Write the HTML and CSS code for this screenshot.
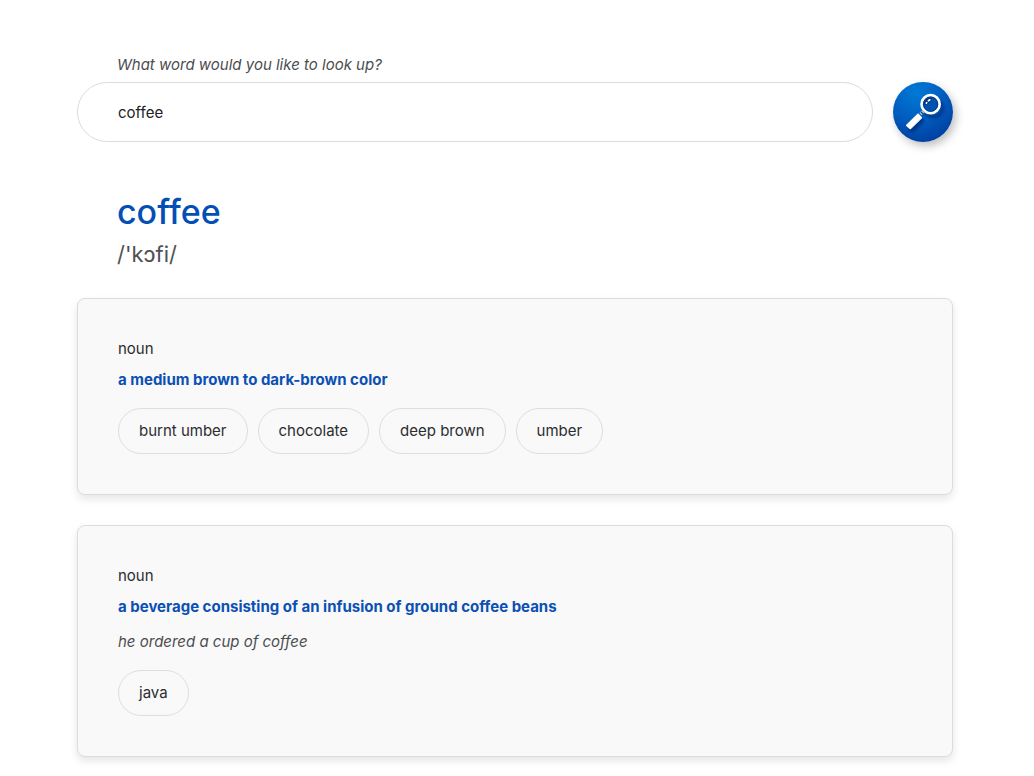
FILE: index.html
```html
<!DOCTYPE html>
<html lang="en">
<head>
<meta charset="utf-8">
<meta name="viewport" content="width=device-width, initial-scale=1">
<title>Dictionary</title>
<link rel="stylesheet" href="styles.css">
</head>
<body>
<main class="page">
  <form class="search">
    <label class="search-label" for="word">What word would you like to look up?</label>
    <div class="search-row">
      <input class="search-input" id="word" type="text" value="coffee">
      <button class="search-button" type="button" aria-label="Search">
        <svg class="search-icon" viewBox="0 0 60 60" aria-hidden="true">
          <defs>
            <radialGradient id="disc" cx="38%" cy="18%" r="84%">
              <stop offset="0" stop-color="#007ad4"/>
              <stop offset=".5" stop-color="#005fc2"/>
              <stop offset="1" stop-color="#0040a0"/>
            </radialGradient>
            <filter id="soft" x="-30%" y="-30%" width="160%" height="160%">
              <feGaussianBlur stdDeviation="1.5"/>
            </filter>
          </defs>
          <circle cx="30" cy="30" r="30" fill="url(#disc)"/>
          <g filter="url(#soft)" opacity=".8" transform="translate(3 4)" stroke="#002a78" fill="none">
            <circle cx="37.500" cy="22" r="9" stroke-width="3"/>
            <path d="M16 43.500L25 34.500" stroke-width="6" stroke-linecap="round"/>
          </g>
          <circle cx="37.600" cy="22.200" r="9" fill="#0052ae" stroke="#fff" stroke-width="2.800"/>
          <circle cx="37.600" cy="22.200" r="7.200" fill="none" stroke="#003680" stroke-width=".9"/>
          <path d="M31.200 22.500A6.500 6.500 0 0 1 38.500 15.700Q39.500 18.500 36 21T31.200 22.500Z" fill="#003078"/>
          <path d="M33.300 21.200l.4-.5M35.400 18.800l1.500-1" stroke="#fff" stroke-width="1.700" stroke-linecap="round"/>
          <path d="M27.500 32.200l3.300-3.300" stroke="#a8bdd4" stroke-width="3.200"/>
          <path d="M28 29.800l2.300 2.300" stroke="#17345f" stroke-width="1.200"/>
          <path d="M13.800 43.300L25 32.300L28.400 35.700L17.200 46.500Z" fill="#fff" stroke="#fff" stroke-width="1.600" stroke-linejoin="round"/>
          <path d="M18.300 46.200l9.300-9" stroke="#c3cfdd" stroke-width=".8"/>
        </svg>
      </button>
    </div>
  </form>

  <header class="headword">
    <h1 class="word">coffee</h1>
    <p class="phonetic">/'kɔfi/</p>
  </header>

  <div class="meanings">
    <section class="card">
      <p class="part">noun</p>
      <h2 class="definition">a medium brown to dark-brown color</h2>
      <div class="chips">
        <button class="chip" type="button">burnt umber</button>
        <button class="chip" type="button">chocolate</button>
        <button class="chip" type="button">deep brown</button>
        <button class="chip" type="button">umber</button>
      </div>
    </section>
    <section class="card">
      <p class="part">noun</p>
      <h2 class="definition">a beverage consisting of an infusion of ground coffee beans</h2>
      <p class="example">he ordered a cup of coffee</p>
      <div class="chips">
        <button class="chip" type="button">java</button>
      </div>
    </section>
  </div>
</main>
</body>
</html>
```

FILE: styles.css
```css
* {
  box-sizing: border-box;
}

body {
  margin: 0;
  background: #fff;
  color: #2b2d30;
  font-family: Inter, "Liberation Sans", sans-serif;
  font-size: 15px;
  line-height: 24px;
}

h1, h2, p {
  margin: 0;
}

.page {
  padding: 53px 81px 19px 77px;
}

.search-label {
  display: block;
  padding-left: 40px;
  margin-bottom: 5px;
  color: #4b4d50;
  font-style: italic;
}

.search-row {
  display: flex;
  gap: 20px;
}

.search-input {
  flex: 1;
  min-width: 0;
  height: 60px;
  padding: 0 40px;
  border: 1px solid #dcdcdc;
  border-radius: 30px;
  background: #fff;
  color: #202327;
  font: inherit;
}

.search-button {
  width: 60px;
  height: 60px;
  padding: 0;
  border: 0;
  border-radius: 50%;
  background: none;
  box-shadow: 3px 4px 8px rgba(0, 0, 0, .25);
  cursor: pointer;
}

.search-icon {
  display: block;
  width: 100%;
}

.headword {
  padding: 48px 40px 28px;
}

.word {
  color: #034fb5;
  font-size: 34px;
  font-weight: 500;
  line-height: 44px;
}

.phonetic {
  margin-top: 4px;
  color: #4f5153;
  font-size: 22px;
  line-height: 32px;
}

.meanings {
  display: grid;
  gap: 30px;
}

.card {
  padding: 38px 40px 40px;
  border: 1px solid #dcdcdc;
  border-radius: 8px;
  background: #f9f9f9;
  box-shadow: 0 4px 8px rgba(0, 0, 0, .1);
}

.definition {
  margin-top: 7px;
  color: #0b50b4;
  font-size: 15px;
  font-weight: 700;
  line-height: 24px;
}

.example {
  margin-top: 11px;
  color: #4b4d50;
  font-style: italic;
}

.chips {
  display: flex;
  flex-wrap: wrap;
  gap: 10px;
  margin-top: 16px;
}

.chip {
  height: 46px;
  padding: 0 20px;
  border: 1px solid #dedede;
  border-radius: 23px;
  background: transparent;
  color: inherit;
  font: inherit;
  cursor: pointer;
}
```
